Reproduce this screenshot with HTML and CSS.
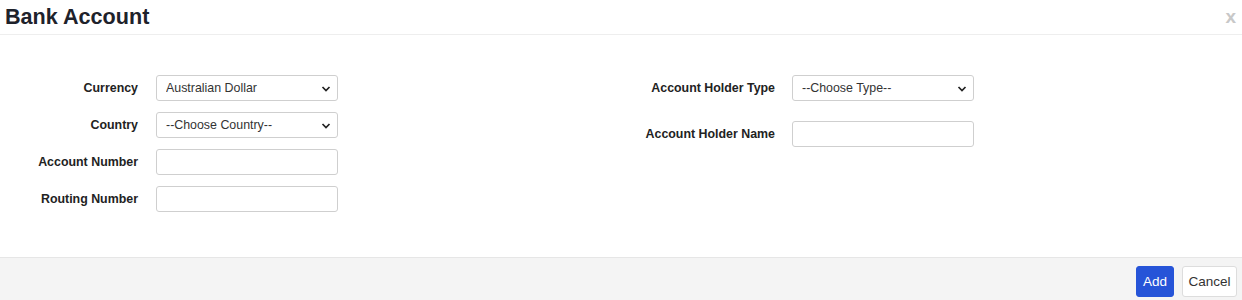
FILE: index.html
```html
<html>
<head>
<meta charset="UTF-8">
<link rel="stylesheet" href="styles.css">
</head>
<body>
<div class="modal">
  <div class="modal-header">
    <h1 class="modal-title">Bank Account</h1>
    <span class="close">x</span>
  </div>
  <div class="modal-body">
    <div class="col col-left">
      <div class="row">
        <label>Currency</label>
        <span class="select-wrap">
          <select class="field"><option>Australian Dollar</option></select>
          <svg class="chevron" width="10" height="6" viewBox="0 0 10 6"><path d="M1.5 1l3.5 3.5 3.5-3.5" fill="none" stroke="#222" stroke-width="1.7"/></svg>
        </span>
      </div>
      <div class="row">
        <label>Country</label>
        <span class="select-wrap">
          <select class="field"><option>--Choose Country--</option></select>
          <svg class="chevron" width="10" height="6" viewBox="0 0 10 6"><path d="M1.5 1l3.5 3.5 3.5-3.5" fill="none" stroke="#222" stroke-width="1.7"/></svg>
        </span>
      </div>
      <div class="row">
        <label>Account Number</label>
        <input class="field" type="text">
      </div>
      <div class="row">
        <label>Routing Number</label>
        <input class="field" type="text">
      </div>
    </div>
    <div class="col col-right">
      <div class="row">
        <label>Account Holder Type</label>
        <span class="select-wrap">
          <select class="field"><option>--Choose Type--</option></select>
          <svg class="chevron" width="10" height="6" viewBox="0 0 10 6"><path d="M1.5 1l3.5 3.5 3.5-3.5" fill="none" stroke="#222" stroke-width="1.7"/></svg>
        </span>
      </div>
      <div class="row">
        <label>Account Holder Name</label>
        <input class="field" type="text">
      </div>
    </div>
  </div>
  <div class="modal-footer">
    <button class="btn btn-primary">Add</button>
    <button class="btn btn-default">Cancel</button>
  </div>
</div>
</body>
</html>
```

FILE: styles.css
```css
*{
margin:0;
padding:0;
box-sizing:border-box;
}
body{
font-family:"Liberation Sans",Arial,sans-serif;
font-size:12.4px;
color:#333;
background:#fff;
}
.modal-header{
height:35px;
border-bottom:1px solid #eeeeee;
display:flex;
justify-content:space-between;
align-items:center;
padding:0 6px 0 5px;
}
.modal-title{
font-size:21.6px;
font-weight:bold;
color:#1e222b;
}
.close{
color:#c8c8c8;
font-weight:bold;
font-size:19px;
margin-top:-1px;
}
.modal-body{
height:222px;
display:flex;
padding-top:40px;
}
.col{
display:flex;
flex-direction:column;
}
.col-left{
gap:11px;
width:637px;
}
.col-right{
gap:20px;
}
.row{
display:flex;
align-items:center;
}
.row label{
width:138px;
text-align:right;
font-weight:bold;
color:#222;
}
.col-left .row label{
margin-right:18px;
}
.col-right .row label{
margin-right:17px;
}
.select-wrap{
position:relative;
display:flex;
}
.field{
width:182px;
height:26px;
border:1px solid #cfcfcf;
border-radius:3px;
background:#fff;
font-family:"Liberation Sans",Arial,sans-serif;
font-size:12.4px;
color:#333;
padding:0 9px;
appearance:none;
-webkit-appearance:none;
outline:none;
}
.chevron{
position:absolute;
right:7px;
top:11px;
pointer-events:none;
}
.modal-footer{
height:43px;
background:#f4f4f4;
border-top:1px solid #e6e6e6;
display:flex;
justify-content:flex-end;
align-items:flex-start;
gap:8px;
padding:8px 5px 0 0;
}
.btn{
height:31px;
border-radius:3px;
font-family:"Liberation Sans",Arial,sans-serif;
font-size:13.5px;
padding:0 5px;
}
.btn-primary{
background:#2654d8;
color:#fff;
border:1px solid #2654d8;
width:38px;
}
.btn-default{
background:#fff;
color:#333;
border:1px solid #dddddd;
width:55px;
}
```
